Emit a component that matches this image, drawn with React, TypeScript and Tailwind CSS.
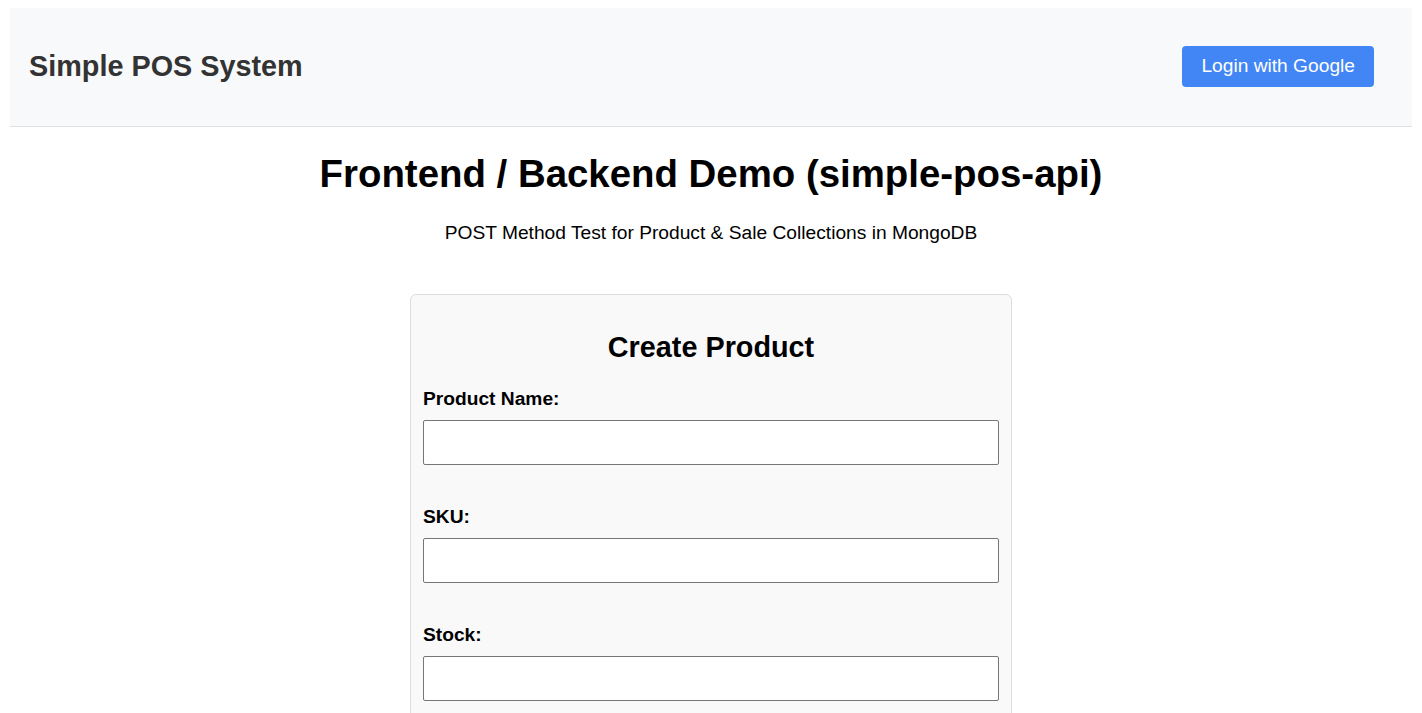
import React, { useState } from 'react';

const fields = [
  { id: 'name', label: 'Product Name:', type: 'text' },
  { id: 'sku', label: 'SKU:', type: 'text' },
  { id: 'stock', label: 'Stock:', type: 'number' },
];

const App: React.FC = () => {
  const [values, setValues] = useState<Record<string, string>>({});

  return (
    <div className="min-h-screen bg-white font-['Liberation_Sans',Arial,sans-serif] text-black">
      <header className="mx-[10px] mt-[8px] h-[119px] flex items-center justify-between pl-[19px] pr-[38px] bg-[#f8f9fa] border-b border-[#dee2e6]">
        <h1 className="text-[28.8px] leading-[33px] font-bold text-[#333] mb-[2px]">Simple POS System</h1>
        <button className="bg-[#4285f4] text-white text-[19.2px] leading-[22px] px-[19px] py-[9.5px] rounded-[4px] mb-[2px]">
          Login with Google
        </button>
      </header>

      <main className="flex flex-col items-center">
        <h1 className="mt-[25px] text-[38.4px] leading-[44px] font-bold">Frontend / Backend Demo (simple-pos-api)</h1>
        <p className="mt-[26px] text-[19.2px] leading-[22px]">POST Method Test for Product &amp; Sale Collections in MongoDB</p>

        <div className="mt-[50px] mb-8 w-[602px] bg-[#f9f9f9] border border-[#dddddd] rounded-[6px] px-[12px] pb-[12px]">
          <h2 className="mt-[36px] mb-[24px] text-center text-[28.8px] leading-[33px] font-bold">Create Product</h2>
          <form className="flex flex-col" onSubmit={(e) => e.preventDefault()}>
            {fields.map((f) => (
              <div key={f.id} className="flex flex-col mb-[41px]">
                <label htmlFor={f.id} className="text-[19.2px] leading-[22px] font-bold mb-[10px]">{f.label}</label>
                <input
                  id={f.id}
                  type={f.type}
                  value={values[f.id] || ''}
                  onChange={(e) => setValues({ ...values, [f.id]: e.target.value })}
                  className="h-[45px] bg-white border border-[#767676] rounded-[2px] px-[8px] text-[19.2px]"
                />
              </div>
            ))}
          </form>
        </div>
      </main>
    </div>
  );
};

export default App;
